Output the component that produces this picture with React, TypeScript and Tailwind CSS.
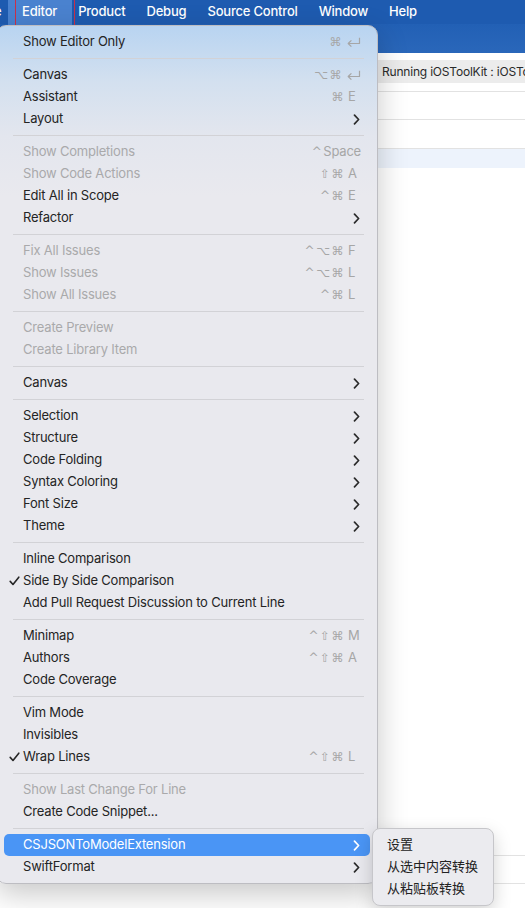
import type { ReactNode } from "react";

type Item = {
  label: string;
  mods?: string;
  keyName?: string;
  sub?: boolean;
  disabled?: boolean;
  checked?: boolean;
  active?: boolean;
};

const sections: Item[][] = [
  [{ label: "Show Editor Only", mods: "⌘", keyName: "return" }],
  [
    { label: "Canvas", mods: "⌥⌘", keyName: "return" },
    { label: "Assistant", mods: "⌘", keyName: "E" },
    { label: "Layout", sub: true },
  ],
  [
    { label: "Show Completions", mods: "^", keyName: "Space", disabled: true },
    { label: "Show Code Actions", mods: "⇧⌘", keyName: "A", disabled: true },
    { label: "Edit All in Scope", mods: "^⌘", keyName: "E" },
    { label: "Refactor", sub: true },
  ],
  [
    { label: "Fix All Issues", mods: "^⌥⌘", keyName: "F", disabled: true },
    { label: "Show Issues", mods: "^⌥⌘", keyName: "L", disabled: true },
    { label: "Show All Issues", mods: "^⌘", keyName: "L", disabled: true },
  ],
  [
    { label: "Create Preview", disabled: true },
    { label: "Create Library Item", disabled: true },
  ],
  [{ label: "Canvas", sub: true }],
  [
    { label: "Selection", sub: true },
    { label: "Structure", sub: true },
    { label: "Code Folding", sub: true },
    { label: "Syntax Coloring", sub: true },
    { label: "Font Size", sub: true },
    { label: "Theme", sub: true },
  ],
  [
    { label: "Inline Comparison" },
    { label: "Side By Side Comparison", checked: true },
    { label: "Add Pull Request Discussion to Current Line" },
  ],
  [
    { label: "Minimap", mods: "^⇧⌘", keyName: "M" },
    { label: "Authors", mods: "^⇧⌘", keyName: "A" },
    { label: "Code Coverage" },
  ],
  [
    { label: "Vim Mode" },
    { label: "Invisibles" },
    { label: "Wrap Lines", checked: true, mods: "^⇧⌘", keyName: "L" },
  ],
  [
    { label: "Show Last Change For Line", disabled: true },
    { label: "Create Code Snippet..." },
  ],
  [
    { label: "CSJSONToModelExtension", sub: true, active: true },
    { label: "SwiftFormat", sub: true },
  ],
];

const menuBar = ["Product", "Debug", "Source Control", "Window", "Help"];

function Chevron({ white }: { white?: boolean }) {
  return (
    <svg width="7" height="11" viewBox="0 0 7 11" className="mr-[1px]">
      <path
        d="M1.5 1.2 L5.6 5.5 L1.5 9.8"
        fill="none"
        stroke={white ? "#ffffff" : "#2b2b2b"}
        strokeWidth="1.7"
        strokeLinecap="round"
        strokeLinejoin="round"
      />
    </svg>
  );
}

function ReturnKey() {
  return (
    <svg width="15" height="11" viewBox="0 0 15 11">
      <path
        d="M13.5 0.8 V6.5 H2.2 M5.4 3.3 L2.2 6.5 L5.4 9.7"
        fill="none"
        stroke="#a6a6a6"
        strokeWidth="1.2"
        strokeLinejoin="round"
      />
    </svg>
  );
}

function Check() {
  return (
    <svg width="11" height="10" viewBox="0 0 11 10">
      <path
        d="M1.2 5.4 L4 8.5 L9.8 1.2"
        fill="none"
        stroke="#262626"
        strokeWidth="1.6"
        strokeLinecap="round"
        strokeLinejoin="round"
      />
    </svg>
  );
}

function Shortcut({ mods, keyName }: { mods: string; keyName: string }) {
  let key: ReactNode = keyName;
  if (keyName === "return") key = <ReturnKey />;
  return (
    <span className="flex items-center text-[#a6a6a6] text-[13px]">
      <span className="tracking-[1.5px] font-['DejaVu_Sans',sans-serif] text-[12px]">{mods}</span>
      <span className={keyName === "Space" ? "" : "min-w-[13px] ml-[3px] flex"}>{key}</span>
    </span>
  );
}

function Row({ item }: { item: Item }) {
  const color = item.active
    ? "text-white"
    : item.disabled
      ? "text-[#a9a9ab]"
      : "text-[#242424]";
  return (
    <div
      className={`flex items-center h-[22px] mx-[7px] pl-[5px] pr-[9px] rounded-[5px] ${
        item.active ? "bg-[#4a95f5]" : ""
      }`}
    >
      <span className="w-[14px] flex items-center">{item.checked && <Check />}</span>
      <span className={`flex-1 ${color}`}>{item.label}</span>
      {item.mods && item.keyName && <Shortcut mods={item.mods} keyName={item.keyName} />}
      {item.sub && <Chevron white={item.active} />}
    </div>
  );
}

export default function App() {
  return (
    <div className="relative w-[525px] h-[908px] overflow-hidden bg-white font-['Inter','Noto_Sans_CJK_SC',sans-serif] text-[13px] tracking-[-0.2px]">
      {/* system menu bar */}
      <header className="relative h-[24px] bg-[#1e5bb0] flex items-center pl-[22px] gap-[21px] text-white font-medium">
        <span className="absolute left-[-6px]">e</span>
        <span className="relative">
          <span className="absolute left-[-14px] right-[-15px] top-[-10px] bottom-[-9px] rounded-[5px] bg-[#4a82cf]" />
          <span className="absolute left-[-7px] right-[-18px] top-[-8px] bottom-[-7px] border border-[#c8304a]" />
          <span className="relative">Editor</span>
        </span>
        {menuBar.map((m) => (
          <span key={m}>{m}</span>
        ))}
      </header>

      {/* window behind the menu */}
      <div className="h-[29px] bg-[linear-gradient(to_bottom,#2260b5,#2a67ba)]" />
      <div className="flex">
        <div className="w-[378px] shrink-0" />
        <div className="flex-1 min-w-0">
          <div className="h-[7px]" />
          <div className="h-[23px] bg-[#ececec] flex items-center pl-[4px] text-[12px] text-[#2a2a2a] whitespace-nowrap overflow-hidden">
            Running iOSToolKit : iOSToolKit
          </div>
          <div className="h-[9px] border-b border-[#e2e2e2]" />
          <div className="h-[28px] border-b border-[#e2e2e2]" />
          <div className="h-[29px] border-b border-[#e2e2e2]" />
          <div className="h-[19px] bg-[#edf3fc]" />
          <div className="h-[688px] border-b border-[#e2e2e2]" />
          <div className="h-[28px] border-b border-[#e2e2e2]" />
        </div>
      </div>

      {/* Editor menu */}
      <div className="absolute left-[-4px] top-[25px] w-[382px] py-[5px] rounded-[10px] border border-[#bdbdc2] bg-[linear-gradient(to_bottom,#b8d4f1_0px,#d3e0ef_55px,#e3e6ee_110px,#e9e9ee_170px)] shadow-[0_10px_30px_rgba(0,0,0,0.22)]">
        {sections.map((sec, i) => (
          <div key={i}>
            {i > 0 && (
              <div className="h-[11px] flex items-center">
                <div className="h-px flex-1 ml-[16px] mr-[13px] bg-[#d2d2d6]" />
              </div>
            )}
            {sec.map((item) => (
              <Row key={item.label + i} item={item} />
            ))}
          </div>
        ))}
      </div>

      {/* submenu */}
      <div className="absolute left-[372px] top-[828px] w-[122px] py-[5px] rounded-[8px] border border-[#c6c6ca] bg-[#ebebef] shadow-[0_6px_18px_rgba(0,0,0,0.18)] text-[#222222] tracking-normal">
        {["设置", "从选中内容转换", "从粘贴板转换"].map((t) => (
          <div key={t} className="h-[22px] flex items-center pl-[14px]">
            {t}
          </div>
        ))}
      </div>
    </div>
  );
}
